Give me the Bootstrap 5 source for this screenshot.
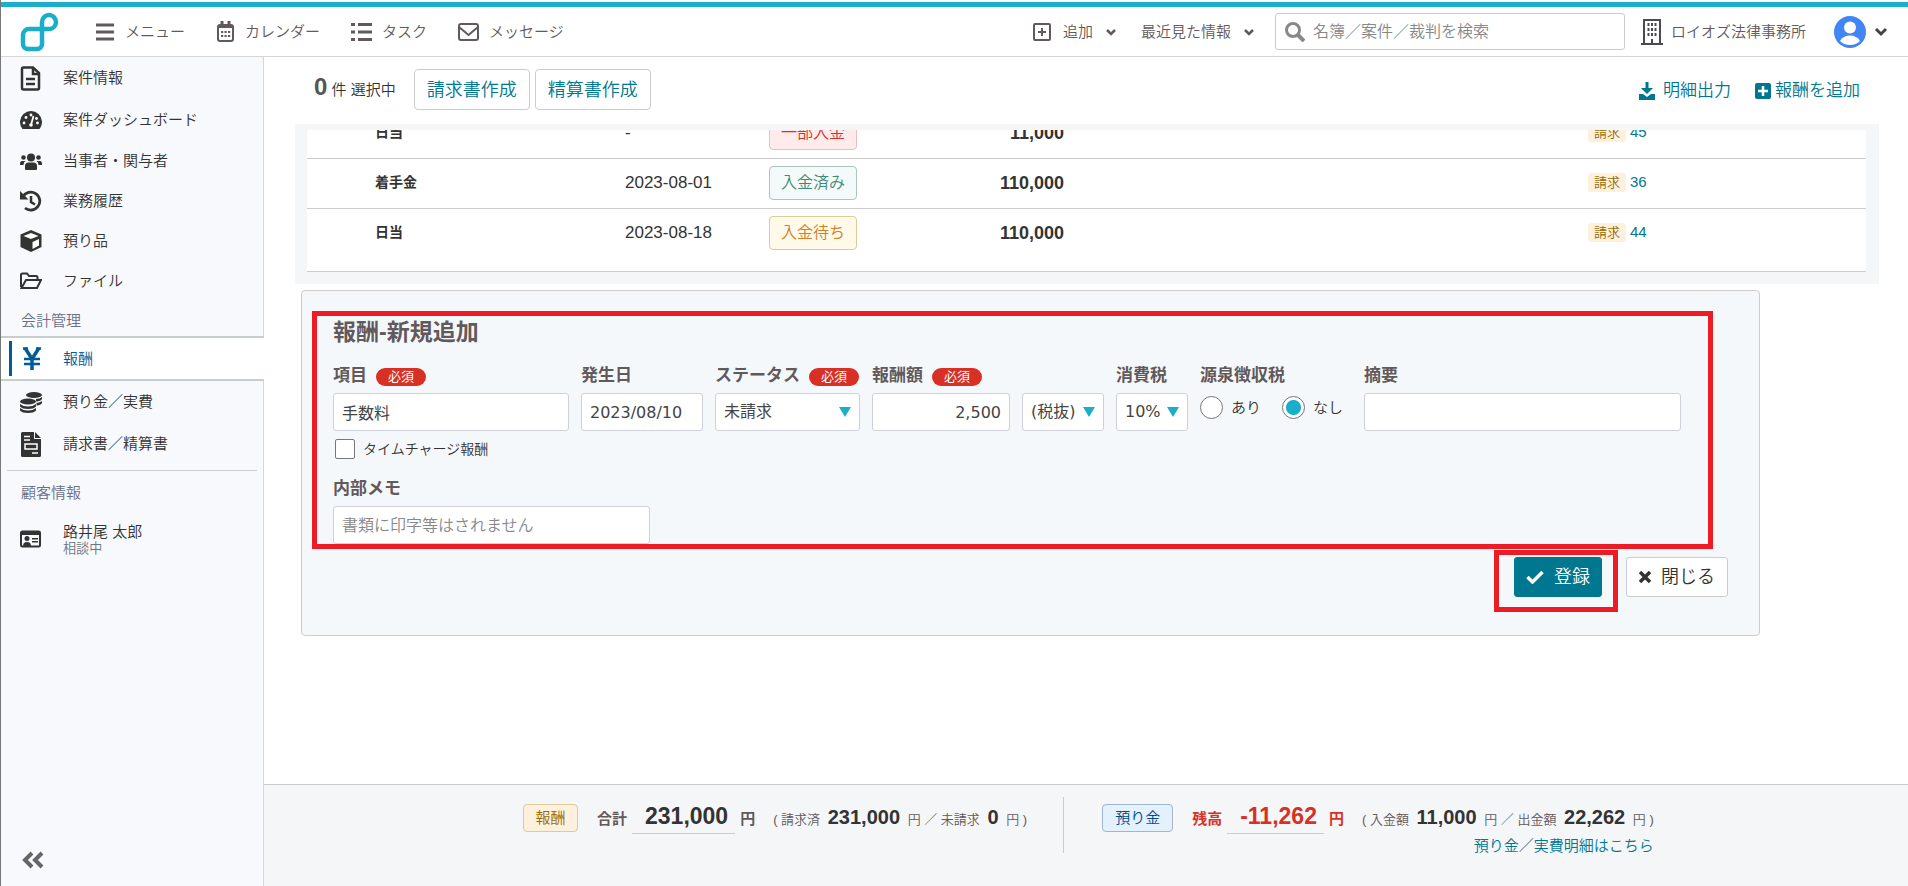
<!DOCTYPE html>
<html lang="ja">
<head>
<meta charset="utf-8">
<meta name="viewport" content="width=device-width, initial-scale=1">
<title>報酬</title>
<link rel="stylesheet" href="https://cdn.jsdelivr.net/npm/bootstrap@5.3.0/dist/css/bootstrap.min.css">
<style>
  :root { --teal:#1aaeca; --deep:#007791; --ink:#333; --soft:#62595b; --line:#ccc; --alert:#d93025; --mark:#ed1c24; }
  body { font-family:"Liberation Sans","Noto Sans CJK JP",sans-serif; font-size:15px; font-weight:350; line-height:20px; color:var(--ink); background:#fff; }
  button, input, select { font-weight:350; }
  a { text-decoration:none; color:var(--deep); }
  svg { flex:none; display:block; }
  .app { border-left:1px solid #777; }
  .topbar { margin-top:2px; border-top:5px solid var(--teal); border-bottom:1px solid #d6d6d6; height:55px; }
  .topbar .tool { color:var(--soft); background:none; border:0; padding:0; display:flex; align-items:center; }
  .main-tools { gap:31px; }
  .main-tools .tool { gap:9px; }
  .drop { gap:12px; }
  .brand-mark { margin:0 36px 0 19px; }
  .searchbox { width:350px; height:37px; border:1px solid var(--line); border-radius:3px; padding-left:9px; color:#888; }
  .searchbox input { border:0; outline:0; width:100%; font-size:16px; padding:0; background:none; }
  .searchbox input::placeholder, .field-box::placeholder { color:#888; opacity:1; }
  .field-box::placeholder { font-weight:350; }
  .sidebar { width:263px; background:#f8f9fc; border-right:1px solid #d6d6d6; }
  .side-link { height:42px; padding-left:19px; gap:21px; color:var(--ink); display:flex; align-items:center; }
  .side-link.tight { height:40px; }
  .side-link svg { width:22px; }
  .side-head { color:#69708a; padding:10px 0 5px 20px; }
  .side-link.current { height:45px; margin-right:-1px; background:#fff; color:#005b96; border-top:2px solid #c6cfcd; border-bottom:2px solid #c6cfcd; padding-left:8px; gap:0; }
  .side-link.current::before { content:""; width:3px; height:35px; background:#005b96; margin-right:9px; }
  .side-link.current svg { margin-right:20px; }
  .side-rule { border-top:1px solid var(--line); margin:5px 6px 2px; }
  .client { margin-top:10px; }
  .fold { color:#666; }
  .action-row { padding:12px 48px 14px 50px; }
  .picked { margin-right:13px; }
  .btn-plain { border:1px solid var(--line); border-radius:4px; background:#fff; height:41px; margin-left:5px; padding:0 12px; color:var(--deep); font-size:18px; line-height:24px; }
  .big-zero { font-size:24px; font-weight:700; color:#555; }
  .export-links { font-size:17px; }
  .list-frame { background:#f5f6f8; margin:0 29px 0 31px; padding:6px 13px 12px 12px; }
  .list-view { height:142px; overflow:hidden; background:#fff; border-bottom:1px solid var(--line); padding-bottom:13px; }
  .fee-table { width:100%; table-layout:fixed; }
  .fee-table td { height:50px; padding:0; vertical-align:middle; border-bottom:1px solid var(--line); }
  .fee-table tr:last-child td { border-bottom:0; }
  .fee-table td.kind { padding:0 0 2px 68px; font-size:14px; font-weight:700; }
  .fee-table .day { font-size:17px; }
  .fee-table .sum { font-size:18px; font-weight:700; text-align:right; }
  .fee-table td.claim { padding:0 0 2px 524px; }
  .fee-table .claim a { font-size:15px; margin-left:4px; }
  .pill { display:inline-flex; align-items:center; justify-content:center; border:1px solid; border-radius:4px; }
  .pill-state { width:88px; height:34px; font-size:16px; }
  .st-part { color:#d93025; background:#ffebeb; border-color:#e8c0c0; }
  .st-done { color:#3f8a77; background:#f4faf9; border-color:#aac5bd; }
  .st-wait { color:#d08020; background:#fff9e9; border-color:#dccb94; }
  .st-fee { color:#946a00; background:#fdf0dc; border-color:#dccb94; width:55px; }
  .st-dep { color:#004a8a; background:#e3f1fd; border-color:#9fb6cc; width:71px; }
  .tag-claim { display:inline-block; background:#fdf0dc; color:#946a00; font-size:13px; line-height:19px; padding:0 6px; border-radius:3px; }
  .entry { background:#f4f8fb; border:1px solid var(--line); border-radius:4px; margin:6px 148px 0 37px; padding:20px 31px 23px 10px; }
  .frame-red { border:5px solid var(--mark); }
  .entry-fields { padding:0 27px 0 16px; margin-right:15px; }
  .entry h2 { font-size:23px; line-height:32px; font-weight:700; color:var(--soft); margin:0 0 16px; }
  .field-row { gap:12px; }
  .field { display:flex; flex-direction:column; }
  .field > label, .field > .cap { font-size:17px; line-height:24px; font-weight:700; color:var(--soft); margin-bottom:5px; white-space:nowrap; display:flex; align-items:center; gap:9px; }
  .must { background:var(--alert); color:#fff; font-size:13px; font-weight:400; line-height:18px; width:50px; text-align:center; border-radius:9px; margin-top:2px; }
  .field-box { height:38px; border:1px solid #ced0da; border-radius:3px; background-color:#fff; padding:0 8px; font-family:"DejaVu Sans","Noto Sans CJK JP",sans-serif; font-size:16px; font-weight:400; color:#444; width:100%; }
  select.field-box { appearance:none; background-image:url("data:image/svg+xml,%3Csvg xmlns='http://www.w3.org/2000/svg' width='12' height='10'%3E%3Cpath d='M0 0h12L6 10z' fill='%231aaeca'/%3E%3C/svg%3E"); background-repeat:no-repeat; background-position:right 8px center; }
  .tick { appearance:none; width:20px; height:20px; border:1px solid #777; border-radius:2px; background:#fff; margin:0; }
  .dot { appearance:none; width:23px; height:23px; border:1px solid #777; border-radius:50%; background:#fff; margin:0; }
  .dot:checked { background:radial-gradient(circle,var(--teal) 7px,#fff 8px); }
  .hold-choice { font-size:15px; gap:8px; padding-top:3px; }
  .hold-choice .dot:nth-of-type(2) { margin-left:13px; }
  .w-item { width:236px } .w-day { width:122px } .w-state { width:145px } .w-fee { width:138px } .w-incl { width:82px } .w-tax { width:72px } .w-hold { width:152px } .w-memo { width:317px }
  .charge-row { font-size:14px; margin:8px 0 18px 2px; }
  .act { height:40px; border-radius:3px; font-size:18px; border:1px solid var(--line); background:#fff; color:var(--ink); display:flex; align-items:center; padding:0 12px; gap:10px; }
  .act-main { background:var(--deep); border-color:var(--deep); color:#fff; padding:0 11px; }
  .frame-btn { padding:2px 11px 10px 15px; margin-top:1px; }
  .totals { background:#f5f6f8; border-top:1px solid var(--line); height:102px; padding:12px 0 0 259px; color:var(--soft); }
  .totals .pill { height:28px; margin-top:7px; }
  .tot-line { font-size:13px; line-height:32px; white-space:nowrap; margin-top:3px; }
  .tot-group { margin-left:19px; }
  .tot-line b.n { font-size:20px; font-weight:700; color:var(--ink); margin:0 4px; }
  .tot-line .unit { font-size:15px; font-weight:700; }
  .tot-line .total { display:inline-block; font-size:23px; font-weight:700; line-height:32px; padding:0 7px 1px 13px; margin:0 5px; border-bottom:1px solid var(--line); color:var(--ink); }
  .tot-line .detail { margin-left:18px; }
  .tot-line.minus .unit, .tot-line.minus .total { color:var(--alert); }
  .tot-split { border-left:1px solid var(--line); height:56px; margin:0 38px 0 36px; }
</style>
</head>
<body>
<div class="app d-flex flex-column min-vh-100">
  <header class="topbar d-flex align-items-center">
    <a href="#" class="brand-mark" aria-label="ホーム"><svg width="40" height="40" viewBox="0 0 40 40" fill="none" stroke="#1aaeca" stroke-width="4.500"><path d="M30 17H9a6 6 0 0 0-6 6v9a5 5 0 0 0 5 5h9a5 5 0 0 0 5-5V10a7 7 0 0 1 14 0a7 7 0 0 1-6 7z"/></svg></a>
    <nav class="main-tools d-flex">
      <a href="#" class="tool"><svg width="20" height="18" viewBox="0 0 20 18" stroke="currentColor" stroke-width="3"><path d="M0 2h18M0 9h18M0 16h18"/></svg>メニュー</a>
      <a href="#" class="tool"><svg width="20" height="22" viewBox="0 0 20 22" fill="none" stroke="currentColor" stroke-width="2"><rect x="2" y="4" width="15" height="16" rx="2"/><path d="M2 5.500h15" stroke-width="3"/><path d="M6 0v5M13 0v5" stroke-width="3"/><path d="M5 11h9.500M5 15h9.500" stroke-dasharray="2.200 1.300" stroke-width="2.200"/></svg>カレンダー</a>
      <a href="#" class="tool"><svg width="22" height="20" viewBox="0 0 22 20" stroke="currentColor" stroke-width="3"><path d="M0 2.500h4M0 10h4M0 17.500h4M7 2.500h14M7 10h14M7 17.500h14"/></svg>タスク</a>
      <a href="#" class="tool"><svg width="22" height="18" viewBox="0 0 22 18" fill="none" stroke="currentColor" stroke-width="2"><rect x="1" y="1" width="19" height="16" rx="2"/><path d="M1 4l9.500 8L20 4"/></svg>メッセージ</a>
    </nav>
    <button type="button" class="tool drop ms-auto me-4"><svg width="18" height="18" viewBox="0 0 18 18" fill="none" stroke="currentColor" stroke-width="2"><rect x="1" y="1" width="16" height="16" rx="1"/><path d="M9 5v8M5 9h8"/></svg>追加<svg width="12" height="8" viewBox="0 0 12 8" fill="none" stroke="currentColor" stroke-width="2.500"><path d="M2 2l4 4 4-4"/></svg></button>
    <button type="button" class="tool drop me-3">最近見た情報<svg class="me-1" width="12" height="8" viewBox="0 0 12 8" fill="none" stroke="currentColor" stroke-width="2.500"><path d="M2 2l4 4 4-4"/></svg></button>
    <label class="searchbox d-flex align-items-center gap-2"><svg width="20" height="20" viewBox="0 0 20 20" fill="none" stroke="currentColor" stroke-width="3"><circle cx="8" cy="8" r="6.500"/><path d="M13 13l6 6" stroke-width="4"/></svg><input type="search" aria-label="検索" placeholder="名簿／案件／裁判を検索"></label>
    <a href="#" class="tool ms-3"><svg class="me-2" width="22" height="26" viewBox="0 0 22 26" fill="none" stroke="#4a4a55" stroke-width="2"><path d="M3 25V1h16v24M0 25h22M11 25v-5"/><path d="M6.500 5.500h9M6.500 10.500h9M6.500 15.500h9" stroke-width="3" stroke-dasharray="2 1.500"/></svg>ロイオズ法律事務所</a>
    <button type="button" class="tool ms-4 me-3" aria-label="アカウント"><svg class="ms-1" width="32" height="32" viewBox="0 0 32 32"><circle cx="16" cy="16" r="16" fill="#4285f4"/><circle cx="16" cy="11.500" r="6" fill="#fff"/><path d="M6 25q3-5.500 10-5.500T26 25q-4 4-10 4T6 25z" fill="#fff"/></svg><svg class="ms-2 me-1" width="14" height="10" viewBox="0 0 14 10" fill="none" stroke="#444" stroke-width="3"><path d="M2 2l5 5 5-5"/></svg></button>
  </header>
  <div class="d-flex flex-grow-1">
    <aside class="sidebar d-flex flex-column flex-shrink-0">
      <a href="#" class="side-link"><svg height="25" viewBox="0 0 22 25" fill="none" stroke="currentColor" stroke-width="2.500"><path d="M2 3q0-1.500 1.500-1.500H13L19 7v15q0 1.500-1.500 1.500h-14Q2 23.500 2 22z"/><path d="M13 2v6h6M6 13h9M6 18h9"/></svg>案件情報</a>
      <a href="#" class="side-link"><svg height="18" viewBox="0 0 22 18"><path d="M2.500 18A11 11 0 1 1 19.500 18z" fill="currentColor"/><g fill="#fff"><circle cx="4" cy="12" r="1.400"/><circle cx="6" cy="6.500" r="1.400"/><circle cx="11" cy="4" r="1.400"/><circle cx="17.500" cy="12" r="1.400"/><circle cx="16.500" cy="7.500" r="1.400"/></g><path d="M13.500 5L11 14" stroke="#fff" stroke-width="1.800"/><circle cx="11" cy="14" r="1.800" fill="#fff"/></svg>案件ダッシュボード</a>
      <a href="#" class="side-link tight"><svg height="17" viewBox="0 0 22 17" fill="currentColor"><circle cx="11" cy="4.500" r="4"/><circle cx="3.500" cy="4.500" r="2.300"/><circle cx="18.500" cy="4.500" r="2.300"/><path d="M5 16v-3q0-3.500 3.500-3.500h5Q17 9.500 17 13v3q0 1-1 1H6q-1 0-1-1zM0 11q0-3 2-3h3.500Q3.500 9 3.500 12H0zM22 11q0-3-2-3h-3.500q2 1 2 4H22z"/></svg>当事者・関与者</a>
      <a href="#" class="side-link tight"><svg height="22" viewBox="0 0 22 22" fill="none" stroke="currentColor" stroke-width="2.800"><path d="M3 6.500a9 9 0 1 1 2 11.500"/><path d="M11 6v6l4 2.500" stroke-width="2.500"/><path d="M0 1v8.500h8.500z" fill="currentColor" stroke="none"/></svg>業務履歴</a>
      <a href="#" class="side-link tight"><svg height="22" viewBox="0 0 22 22"><path d="M11 0l10.500 4.500V17L11 22 .5 17V4.500z" fill="currentColor"/><path d="M3.500 6L11 3l7.500 3L11 9zM12.500 12l6.500-3v6.500l-6.500 3.500z" fill="#fff"/></svg>預り品</a>
      <a href="#" class="side-link tight"><svg height="18" viewBox="0 0 22 18" fill="none" stroke="currentColor" stroke-width="2"><path d="M1 15V3q0-1.500 1.500-1.500H7L9 4h7q1.500 0 1.500 1.500V8M1.500 16L6 8h15l-4 8z"/></svg>ファイル</a>
      <div class="side-head">会計管理</div>
      <a href="#" class="side-link current" aria-current="page"><svg height="24" viewBox="0 0 22 24" fill="none" stroke="currentColor" stroke-width="3.500"><path d="M4 1l7 11 7-11M11 12v11"/><path d="M3 12h16M3 17h16M2 1.500h5M15 1.500h5" stroke-width="2.500"/></svg>報酬</a>
      <a href="#" class="side-link"><svg height="21" viewBox="0 0 22 21" fill="currentColor"><ellipse cx="14" cy="3" rx="8" ry="3"/><path d="M16 7q4 0 6-2v2q-1 2-6 2.500zM16.500 11q4-.5 5.500-2v2q-1 2-5.500 2.500z"/><ellipse cx="8" cy="9.500" rx="8" ry="3"/><path d="M0 12q3 2.500 8 2.500t8-2.500v2.500q-2 2.500-8 2.500T0 14.500zM0 16q3 2.500 8 2.500t8-2.500v2.500Q14 21 8 21t-8-2.500z"/></svg>預り金／実費</a>
      <a href="#" class="side-link"><svg height="25" viewBox="0 0 22 25"><path d="M2.500 0H14v7h7v16.500q0 1.500-1.500 1.500h-17Q1 25 1 23.500v-22Q1 0 2.500 0zM15 0l6 6h-6z" fill="currentColor"/><path d="M4 4.500h6M4 8h6M12 21h6" stroke="#fff" stroke-width="1.500"/><rect x="5" y="12" width="12" height="5" fill="none" stroke="#fff" stroke-width="1.500"/></svg>請求書／精算書</a>
      <div class="side-rule"></div>
      <div class="side-head">顧客情報</div>
      <a href="#" class="side-link client"><svg height="18" viewBox="0 0 22 18"><rect x="1" y="1.500" width="19" height="15" rx="1.500" fill="none" stroke="currentColor" stroke-width="2"/><path d="M1 3h19" stroke="currentColor" stroke-width="4"/><circle cx="7" cy="8.500" r="2.500" fill="currentColor"/><path d="M3 16q0-4 4-4t4 4zM12 8h6v1.500h-6zM12 11h6v1.500h-6z" fill="currentColor"/></svg><span>路井尾 太郎<small class="d-block lh-1 text-secondary">相談中</small></span></a>
      <button type="button" class="fold btn mt-auto p-0 ms-3 mb-3 ps-1 align-self-start" aria-label="折りたたむ"><svg width="22" height="18" viewBox="0 0 22 18" fill="none" stroke="currentColor" stroke-width="4"><path d="M10 2L3 9l7 7M20 2l-7 7 7 7"/></svg></button>
    </aside>
    <main class="d-flex flex-column flex-grow-1">
      <div class="action-row d-flex align-items-start">
        <div class="picked"><span class="big-zero lh-base">0</span> 件 選択中</div>
        <button type="button" class="btn-plain">請求書作成</button>
        <button type="button" class="btn-plain">精算書作成</button>
        <div class="export-links ms-auto d-flex gap-4 pt-2 mt-1">
          <a href="#" class="d-flex align-items-center gap-2"><svg width="16" height="18" viewBox="0 0 16 18" fill="currentColor"><path d="M6.500 0h3v6H14l-6 6-6-6h4.500zM0 12h4l4 3 4-3h4v6H0z"/></svg>明細出力</a>
          <a href="#" class="d-flex align-items-center gap-1"><svg width="16" height="16" viewBox="0 0 16 16"><rect width="16" height="16" rx="2" fill="currentColor"/><path d="M8 3v10M3 8h10" stroke="#fff" stroke-width="2.500"/></svg>報酬を追加</a>
        </div>
      </div>
      <div class="list-frame">
        <div class="list-view d-flex align-items-end">
          <table class="fee-table">
            <colgroup><col style="width:318px"><col style="width:144px"><col style="width:88px"><col style="width:207px"><col></colgroup>
            <tr><td class="kind">日当</td><td class="day">-</td><td><span class="pill pill-state st-part">一部入金</span></td><td class="sum">11,000</td><td class="claim"><span class="tag-claim">請求</span><a href="#">45</a></td></tr>
            <tr><td class="kind">着手金</td><td class="day">2023-08-01</td><td><span class="pill pill-state st-done">入金済み</span></td><td class="sum">110,000</td><td class="claim"><span class="tag-claim">請求</span><a href="#">36</a></td></tr>
            <tr><td class="kind">日当</td><td class="day">2023-08-18</td><td><span class="pill pill-state st-wait">入金待ち</span></td><td class="sum">110,000</td><td class="claim"><span class="tag-claim">請求</span><a href="#">44</a></td></tr>
          </table>
        </div>
      </div>
      <form class="entry">
        <div class="frame-red entry-fields">
          <h2>報酬-新規追加</h2>
          <div class="field-row d-flex">
            <div class="field w-item"><label for="item">項目 <span class="must">必須</span></label><input class="field-box" id="item" type="text" value="手数料"></div>
            <div class="field w-day"><label for="day">発生日</label><input class="field-box" id="day" type="text" value="2023/08/10"></div>
            <div class="field w-state"><label for="state">ステータス <span class="must">必須</span></label><select class="field-box" id="state"><option>未請求</option></select></div>
            <div class="field w-fee"><label for="fee">報酬額 <span class="must">必須</span></label><input class="field-box text-end" id="fee" type="text" value="2,500"></div>
            <div class="field w-incl justify-content-end"><select class="field-box" aria-label="税込・税抜"><option>(税抜)</option></select></div>
            <div class="field w-tax"><label for="tax">消費税</label><select class="field-box" id="tax"><option>10%</option></select></div>
            <div class="field w-hold"><span class="cap">源泉徴収税</span>
              <div class="hold-choice d-flex align-items-center"><input class="dot" type="radio" name="hold" id="yes"><label for="yes">あり</label><input class="dot" type="radio" name="hold" id="no" checked><label for="no">なし</label></div></div>
            <div class="field w-memo"><label for="note">摘要</label><input class="field-box" id="note" type="text"></div>
          </div>
          <div class="charge-row d-flex align-items-center gap-2"><input class="tick" type="checkbox" id="charge"><label for="charge">タイムチャージ報酬</label></div>
          <div class="field w-memo"><label for="memo">内部メモ</label><input class="field-box" id="memo" type="text" placeholder="書類に印字等はされません"></div>
        </div>
        <div class="d-flex justify-content-end">
          <div class="frame-red frame-btn"><button type="button" class="act act-main"><svg width="18" height="14" viewBox="0 0 18 14" fill="none" stroke="currentColor" stroke-width="3.500"><path d="M1.500 7l5 5L16.500 2"/></svg>登録</button></div>
          <button type="button" class="act ms-2 mt-2"><svg width="12" height="12" viewBox="0 0 12 12" stroke="currentColor" stroke-width="3.500"><path d="M1 1l10 10M11 1L1 11"/></svg>閉じる</button>
        </div>
      </form>
      <footer class="totals mt-auto d-flex">
        <span class="pill st-fee">報酬</span>
        <div class="tot-group"><div class="tot-line"><span class="unit">合計</span><span class="total">231,000</span><span class="unit">円</span><span class="detail">( 請求済 <b class="n">231,000</b> 円 ／ 未請求 <b class="n">0</b> 円 )</span></div></div>
        <div class="tot-split"></div>
        <span class="pill st-dep">預り金</span>
        <div class="tot-group text-end"><div class="tot-line minus"><span class="unit">残高</span><span class="total">-11,262</span><span class="unit">円</span><span class="detail">( 入金額 <b class="n">11,000</b> 円 ／ 出金額 <b class="n">22,262</b> 円 )</span></div><a href="#">預り金／実費明細はこちら</a></div>
      </footer>
    </main>
  </div>
</div>
<script src="https://cdn.jsdelivr.net/npm/bootstrap@5.3.0/dist/js/bootstrap.bundle.min.js"></script>
</body>
</html>
